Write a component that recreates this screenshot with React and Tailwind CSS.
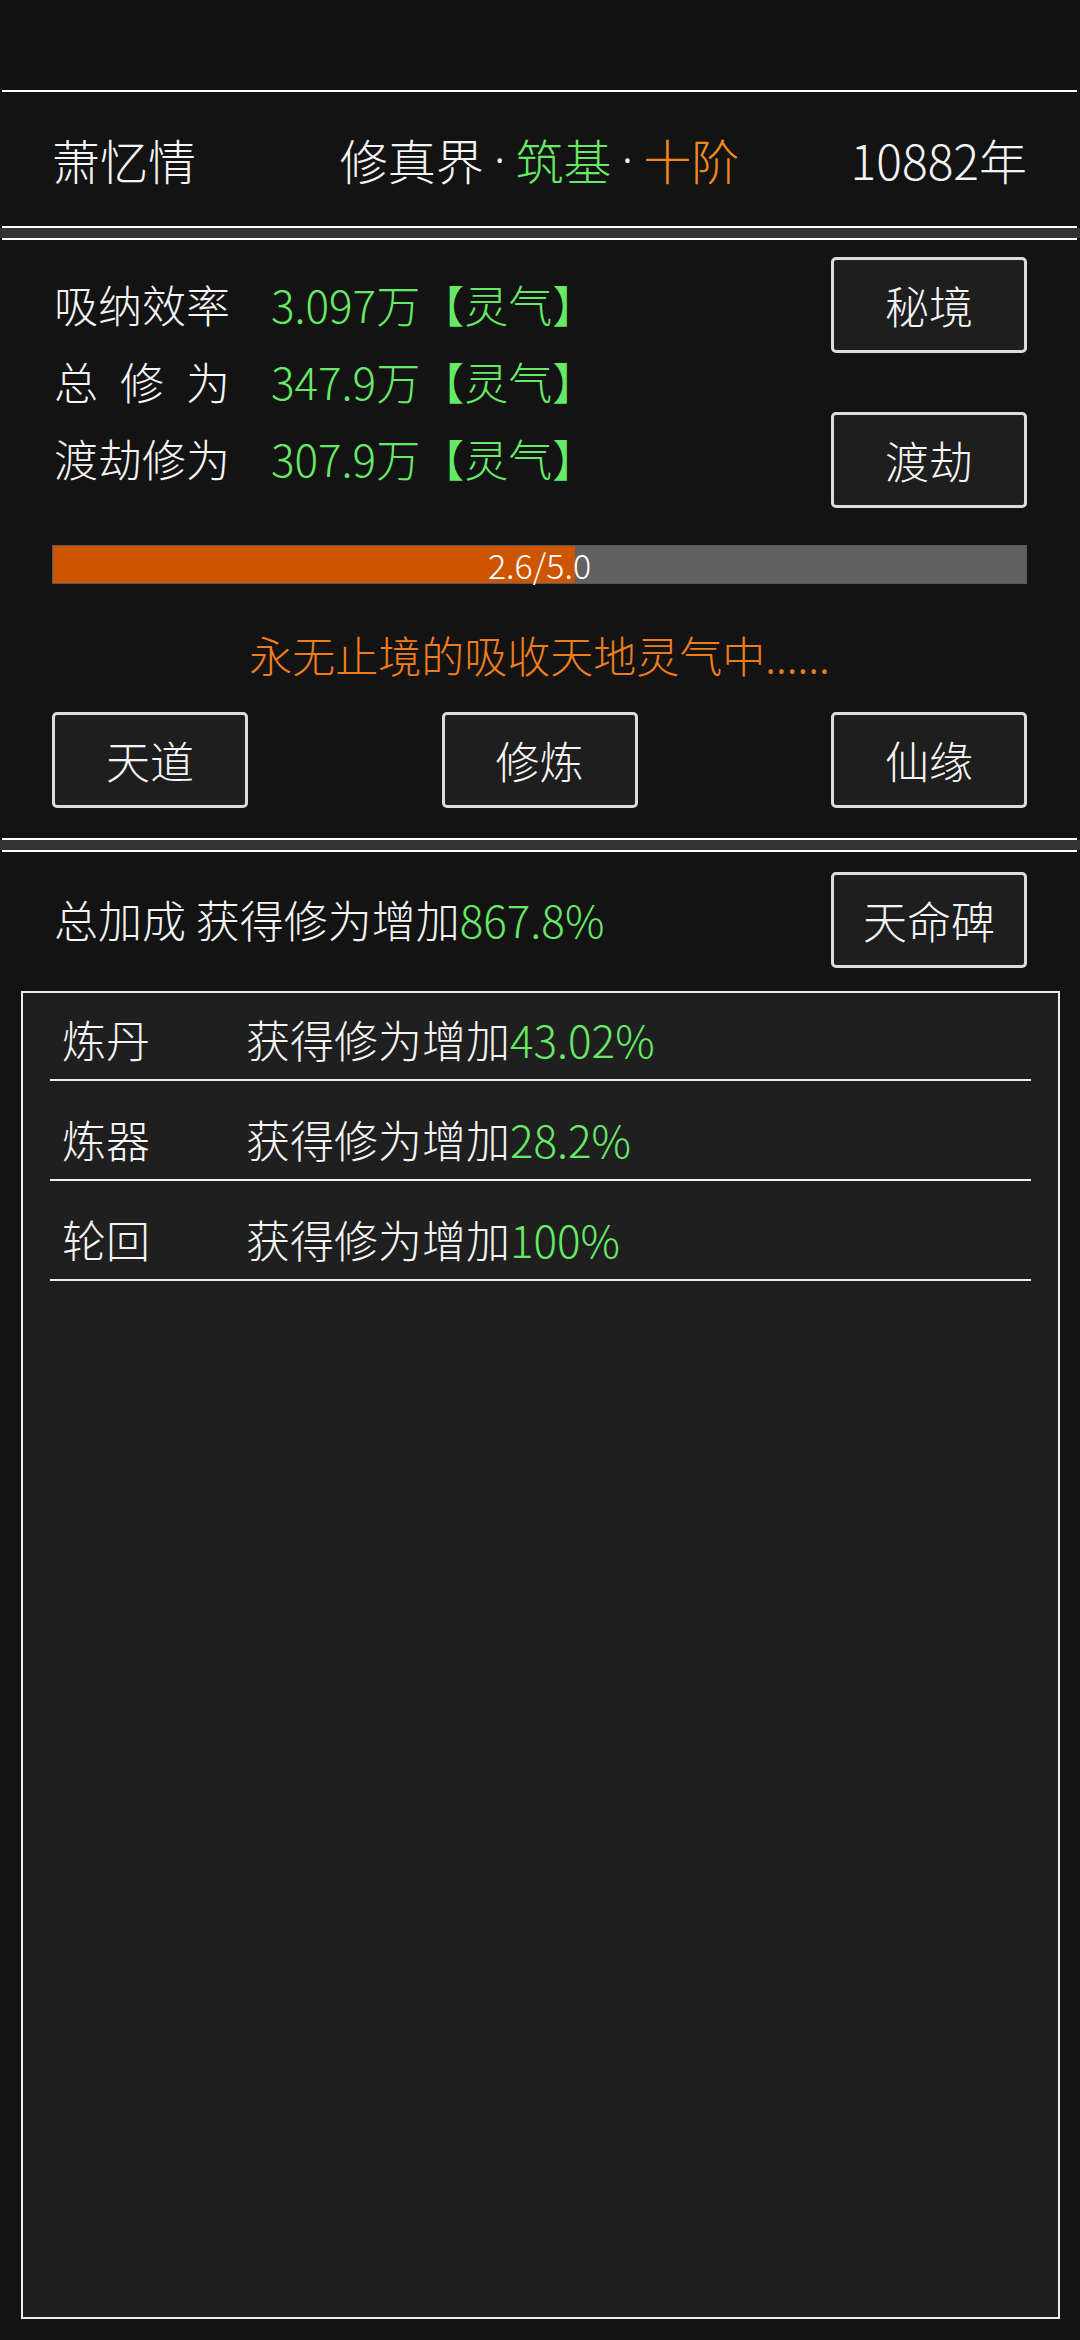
import React from 'react';

const FONT = "font-['Noto_Sans_CJK_SC','Noto_Sans',sans-serif]";

const stats = [
  { label: '吸纳效率', value: '3.097万【灵气】' },
  { label: '总修为', value: '347.9万【灵气】', spaced: true },
  { label: '渡劫修为', value: '307.9万【灵气】' },
];

const bonuses = [
  { name: '炼丹', value: '43.02%' },
  { name: '炼器', value: '28.2%' },
  { name: '轮回', value: '100%' },
];

function Btn({ children }) {
  return (
    <button className="w-[196px] h-[96px] shrink-0 rounded-[5px] border-[3px] border-[#dcdcdc] bg-[#1e1e1e] text-[44px] leading-none text-[#f5f5f5] flex items-center justify-center">
      {children}
    </button>
  );
}

function Divider() {
  return <div className="h-[10px] bg-[#333333]" />;
}

function Dot() {
  return <span className="font-['Noto_Sans',sans-serif] mx-[10px]">·</span>;
}

export default function App() {
  const cur = 2.6;
  const max = 5.0;
  const pct = (cur / max) * 100 + 1.6;

  return (
    <div className={`${FONT} font-light w-[1080px] h-[2340px] bg-[#131313] text-[#f5f5f5] overflow-hidden flex flex-col`}>
      {/* status bar area */}
      <div className="h-[90px] bg-[#111111] shrink-0" />

      {/* header */}
      <div className="h-[138px] shrink-0 border-y-2 border-white mr-[3px] ml-[2px] grid grid-cols-[1fr_auto_1fr] items-center px-[50px] text-[48px] leading-none">
        <span className="justify-self-start">萧忆情</span>
        <span className="flex items-center">
          修真界<Dot /><span className="text-[#66ea66]">筑基</span><Dot /><span className="text-[#f08a1e]">十阶</span>
        </span>
        <span className="justify-self-end">10882年</span>
      </div>

      <Divider />

      {/* cultivation panel */}
      <div className="h-[602px] shrink-0 border-y-2 border-white mr-[3px] ml-[2px] px-[50px] flex flex-col">
        <div className="flex justify-between items-start h-[268px]">
          <div className="mt-[25px] flex flex-col">
            {stats.map((s) => (
              <div key={s.label} className="h-[77px] flex items-center text-[44px] leading-none">
                <div className="w-[219px] pl-[2px]">
                  {s.spaced ? (
                    <div className="w-[176px] flex justify-between">
                      {s.label.split('').map((c) => <span key={c}>{c}</span>)}
                    </div>
                  ) : (
                    s.label
                  )}
                </div>
                <span className="text-[#66ea66]">{s.value}</span>
              </div>
            ))}
          </div>
          <div className="mt-[17px] flex flex-col gap-[59px]">
            <Btn>秘境</Btn>
            <Btn>渡劫</Btn>
          </div>
        </div>

        <div className="mt-[37px] relative h-[39px] bg-[#616161] border border-[#585858]">
          <div className="h-full bg-[#cc5500]" style={{ width: `${pct}%` }} />
          <div className="absolute inset-0 flex items-center justify-center text-[34px] leading-none text-white">
            {cur.toFixed(1)}/{max.toFixed(1)}
          </div>
        </div>

        <div className="mt-[40px] h-[60px] flex items-center justify-center text-[43px] text-[#f07d1c] leading-none">
          永无止境的吸收天地灵气中......
        </div>

        <div className="mt-[28px] flex justify-between">
          <Btn>天道</Btn>
          <Btn>修炼</Btn>
          <Btn>仙缘</Btn>
        </div>
      </div>

      <Divider />

      {/* bonus panel */}
      <div className="flex-1 border-t-2 border-white mr-[3px] ml-[2px] flex flex-col">
        <div className="mt-[20px] px-[50px] flex items-center justify-between">
          <div className="text-[44px] leading-none pl-[2px] -mt-[2px]">
            总加成 获得修为增加<span className="text-[#66ea66]">867.8%</span>
          </div>
          <Btn>天命碑</Btn>
        </div>

        <div className="mt-[23px] ml-[19px] w-[1039px] h-[1328px] border-2 border-[#ececec] bg-[#1f1f1f] px-[27px]">
          {bonuses.map((b, i) => (
            <div
              key={b.name}
              className={`${i === 0 ? 'pt-[24px]' : 'pt-[36px]'} pb-[18px] border-b-2 border-[#f0f0f0] flex items-center text-[44px] leading-[44px]`}
            >
              <span className="w-[196px] pl-[12px]">{b.name}</span>
              <span>
                获得修为增加<span className="text-[#66ea66]">{b.value}</span>
              </span>
            </div>
          ))}
        </div>
      </div>
    </div>
  );
}
